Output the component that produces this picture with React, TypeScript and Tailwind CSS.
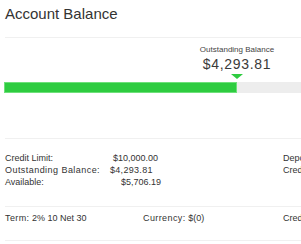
const rows = [
  { label: "Credit Limit:", value: "$10,000.00", pad: "pl-[3px]", right: "Deposit:", spaced: false },
  { label: "Outstanding Balance:", value: "$4,293.81", pad: "pl-0", right: "Credit Hold:", spaced: true },
  { label: "Available:", value: "$5,706.19", pad: "pl-[11px]", right: "", spaced: false },
];

export default function App() {
  return (
    <div className="w-[301px] h-[244px] overflow-hidden bg-white text-[#333] font-['Liberation_Sans',Arial,sans-serif] whitespace-nowrap">
      {/* header */}
      <div className="ml-[5px] h-[38px] border-b border-[#f0f0f0] pt-[4px]">
        <h1 className="text-[15px] leading-[20px]">Account Balance</h1>
      </div>

      {/* balance bar */}
      <div className="ml-[5px] h-[101px] border-b border-[#f0f0f0] pt-[7px]">
        <div className="ml-[194px] w-[76px] flex flex-col items-center">
          <span className="text-[8px] leading-[10px] text-[#444]">Outstanding Balance</span>
          <span className="mt-[1px] text-[14px] leading-[16px] tracking-[0.7px] text-[#3a3a3a]">$4,293.81</span>
          <div className="mt-[2px] w-0 h-0 border-l-[6px] border-r-[6px] border-t-[5px] border-l-transparent border-r-transparent border-t-[#2ecc40]" />
        </div>
        <div className="-ml-[1px] mt-[3px] h-[11px] bg-[#ededed] flex">
          <div className="w-[233px] h-full bg-[#2ecc40] border border-[#6ee07a]" />
        </div>
      </div>

      {/* details */}
      <div className="ml-[5px] h-[68px] border-b border-[#f0f0f0] pt-[13px] text-[9px] leading-[12px]">
        {rows.map((r) => (
          <div key={r.label} className="grid grid-cols-[105px_173px_auto]">
            <span className={r.spaced ? "tracking-[0.45px]" : ""}>{r.label}</span>
            <span className={r.pad + (r.spaced ? " tracking-[0.3px]" : "")}>{r.value}</span>
            <span>{r.right}</span>
          </div>
        ))}
      </div>

      {/* terms */}
      <div className="ml-[5px] h-[34px] border-b border-[#f0f0f0] pt-[5px] text-[9px] leading-[12.5px] grid grid-cols-[138px_140px_auto]">
        <span>
          <span className="tracking-[0.4px]">Term:</span> 2% 10 Net 30
        </span>
        <span>
          <span className="tracking-[0.4px]">Currency:</span> $(0)
        </span>
        <span>Credit Terms:</span>
      </div>
    </div>
  );
}
